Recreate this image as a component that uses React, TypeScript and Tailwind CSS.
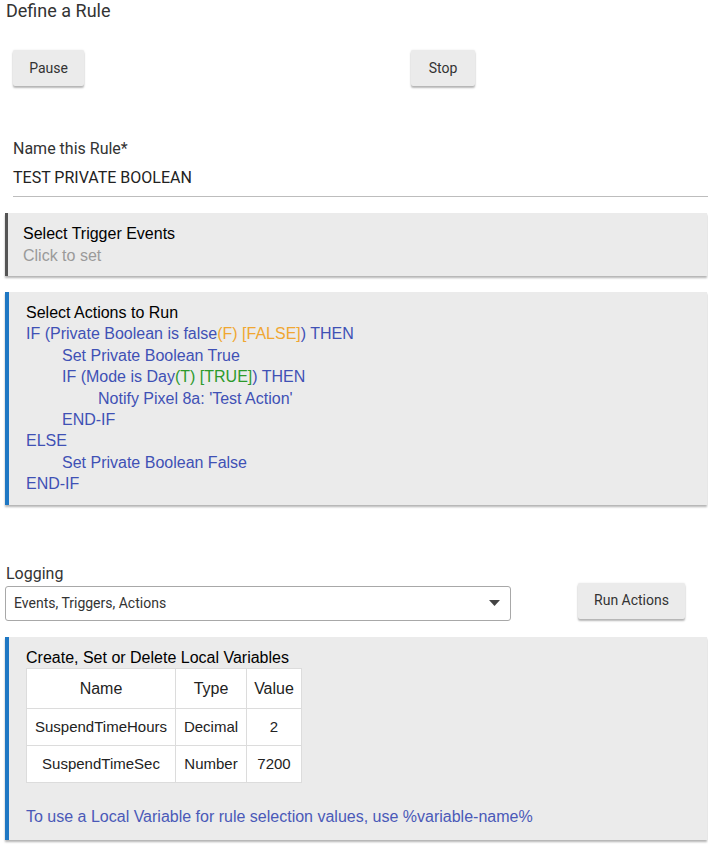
import React from "react";

const roboto = { fontFamily: "Roboto, 'Liberation Sans', sans-serif" };
const arial = { fontFamily: "'Liberation Sans', Arial, sans-serif" };

function Btn({ label, w }: { label: string; w: string }) {
  return (
    <div
      className={`${w} h-[36px] flex items-center justify-center bg-[#ebebeb] rounded-[2px] text-[14px] text-[#333] shadow-[0_2px_2px_rgba(0,0,0,0.28),0_0_2px_rgba(0,0,0,0.1)]`}
      style={roboto}
    >
      {label}
    </div>
  );
}

export default function App() {
  const indent1 = "pl-[36px]";
  const indent2 = "pl-[72px]";
  return (
    <div className="w-[708px] h-[856px] bg-white overflow-hidden text-[#333]">
      <div className="pl-[6px] text-[18px] leading-[22px] text-[#333]" style={roboto}>
        Define a Rule
      </div>

      <div className="flex pl-[13px] mt-[28px]">
        <div className="w-[398px]">
          <Btn label="Pause" w="w-[71px]" />
        </div>
        <Btn label="Stop" w="w-[64px]" />
      </div>

      <div className="ml-[13px] mt-[53px] border-b border-[#bdbdbd] pb-[8px]" style={roboto}>
        <div className="text-[16px] leading-[20px] text-[#333]">Name this Rule*</div>
        <div className="text-[16px] leading-[20px] mt-[9px] text-[#222]">TEST PRIVATE BOOLEAN</div>
      </div>

      <div
        className="ml-[5px] mr-[1px] mt-[16px] bg-[#ebebeb] border-l-[3px] border-[#555] pl-[15px] pt-[10px] pb-[10px] text-[16px] leading-[21.5px] shadow-[0_2px_2px_rgba(0,0,0,0.3)]"
        style={arial}
      >
        <div className="text-black">Select Trigger Events</div>
        <div className="text-[#9a9a9a]">Click to set</div>
      </div>

      <div
        className="ml-[5px] mr-[1px] mt-[16px] bg-[#ebebeb] border-l-[4px] border-[#1e77c3] pl-[17px] pt-[10px] pb-[10px] text-[16px] leading-[21.4px] text-[#3f51b5] shadow-[0_2px_2px_rgba(0,0,0,0.3)]"
        style={arial}
      >
        <div className="text-black">Select Actions to Run</div>
        <div>
          IF (Private Boolean is false<span className="text-[#f0a732]">(F) [FALSE]</span>) THEN
        </div>
        <div className={indent1}>Set Private Boolean True</div>
        <div className={indent1}>
          IF (Mode is Day<span className="text-[#2c9a2c]">(T) [TRUE]</span>) THEN
        </div>
        <div className={indent2}>Notify Pixel 8a: 'Test Action'</div>
        <div className={indent1}>END-IF</div>
        <div>ELSE</div>
        <div className={indent1}>Set Private Boolean False</div>
        <div>END-IF</div>
      </div>

      <div className="pl-[6px] mt-[59px] text-[16px] leading-[20px] text-[#333]" style={roboto}>
        Logging
      </div>
      <div className="flex items-start mt-[-1px]">
        <div
          className="ml-[5px] w-[506px] h-[35px] mt-[3px] border border-[#a8a8a8] rounded-[3px] flex items-center justify-between pl-[8px] pr-[10px] text-[14px] text-[#333] bg-white"
          style={roboto}
        >
          <span>Events, Triggers, Actions</span>
          <svg width="11" height="6" viewBox="0 0 11 6">
            <path d="M0 0 L11 0 L5.5 6 Z" fill="#444" />
          </svg>
        </div>
        <div className="ml-[67px]">
          <Btn label="Run Actions" w="w-[107px]" />
        </div>
      </div>

      <div
        className="ml-[5px] mr-[1px] mt-[16px] bg-[#ebebeb] border-l-[4px] border-[#1e77c3] pl-[17px] pt-[10px] pb-[13px] text-[16px] leading-[21.4px] text-[#3f51b5] shadow-[0_2px_2px_rgba(0,0,0,0.3)]"
        style={arial}
      >
        <div className="text-black">Create, Set or Delete Local Variables</div>
        <table className="bg-white border-collapse text-[#222] text-center">
          <thead>
            <tr className="h-[40px] text-[16px]">
              <th className="w-[149px] border border-[#dcdcdc] font-normal">Name</th>
              <th className="w-[71px] border border-[#dcdcdc] font-normal">Type</th>
              <th className="w-[55px] border border-[#dcdcdc] font-normal">Value</th>
            </tr>
          </thead>
          <tbody className="text-[15px]">
            <tr className="h-[37px]">
              <td className="border border-[#dcdcdc]">SuspendTimeHours</td>
              <td className="border border-[#dcdcdc]">Decimal</td>
              <td className="border border-[#dcdcdc]">2</td>
            </tr>
            <tr className="h-[37px]">
              <td className="border border-[#dcdcdc]">SuspendTimeSec</td>
              <td className="border border-[#dcdcdc]">Number</td>
              <td className="border border-[#dcdcdc]">7200</td>
            </tr>
          </tbody>
        </table>
        <div className="mt-[23px] text-[#4a59b8]">
          To use a Local Variable for rule selection values, use %variable-name%
        </div>
      </div>
    </div>
  );
}
